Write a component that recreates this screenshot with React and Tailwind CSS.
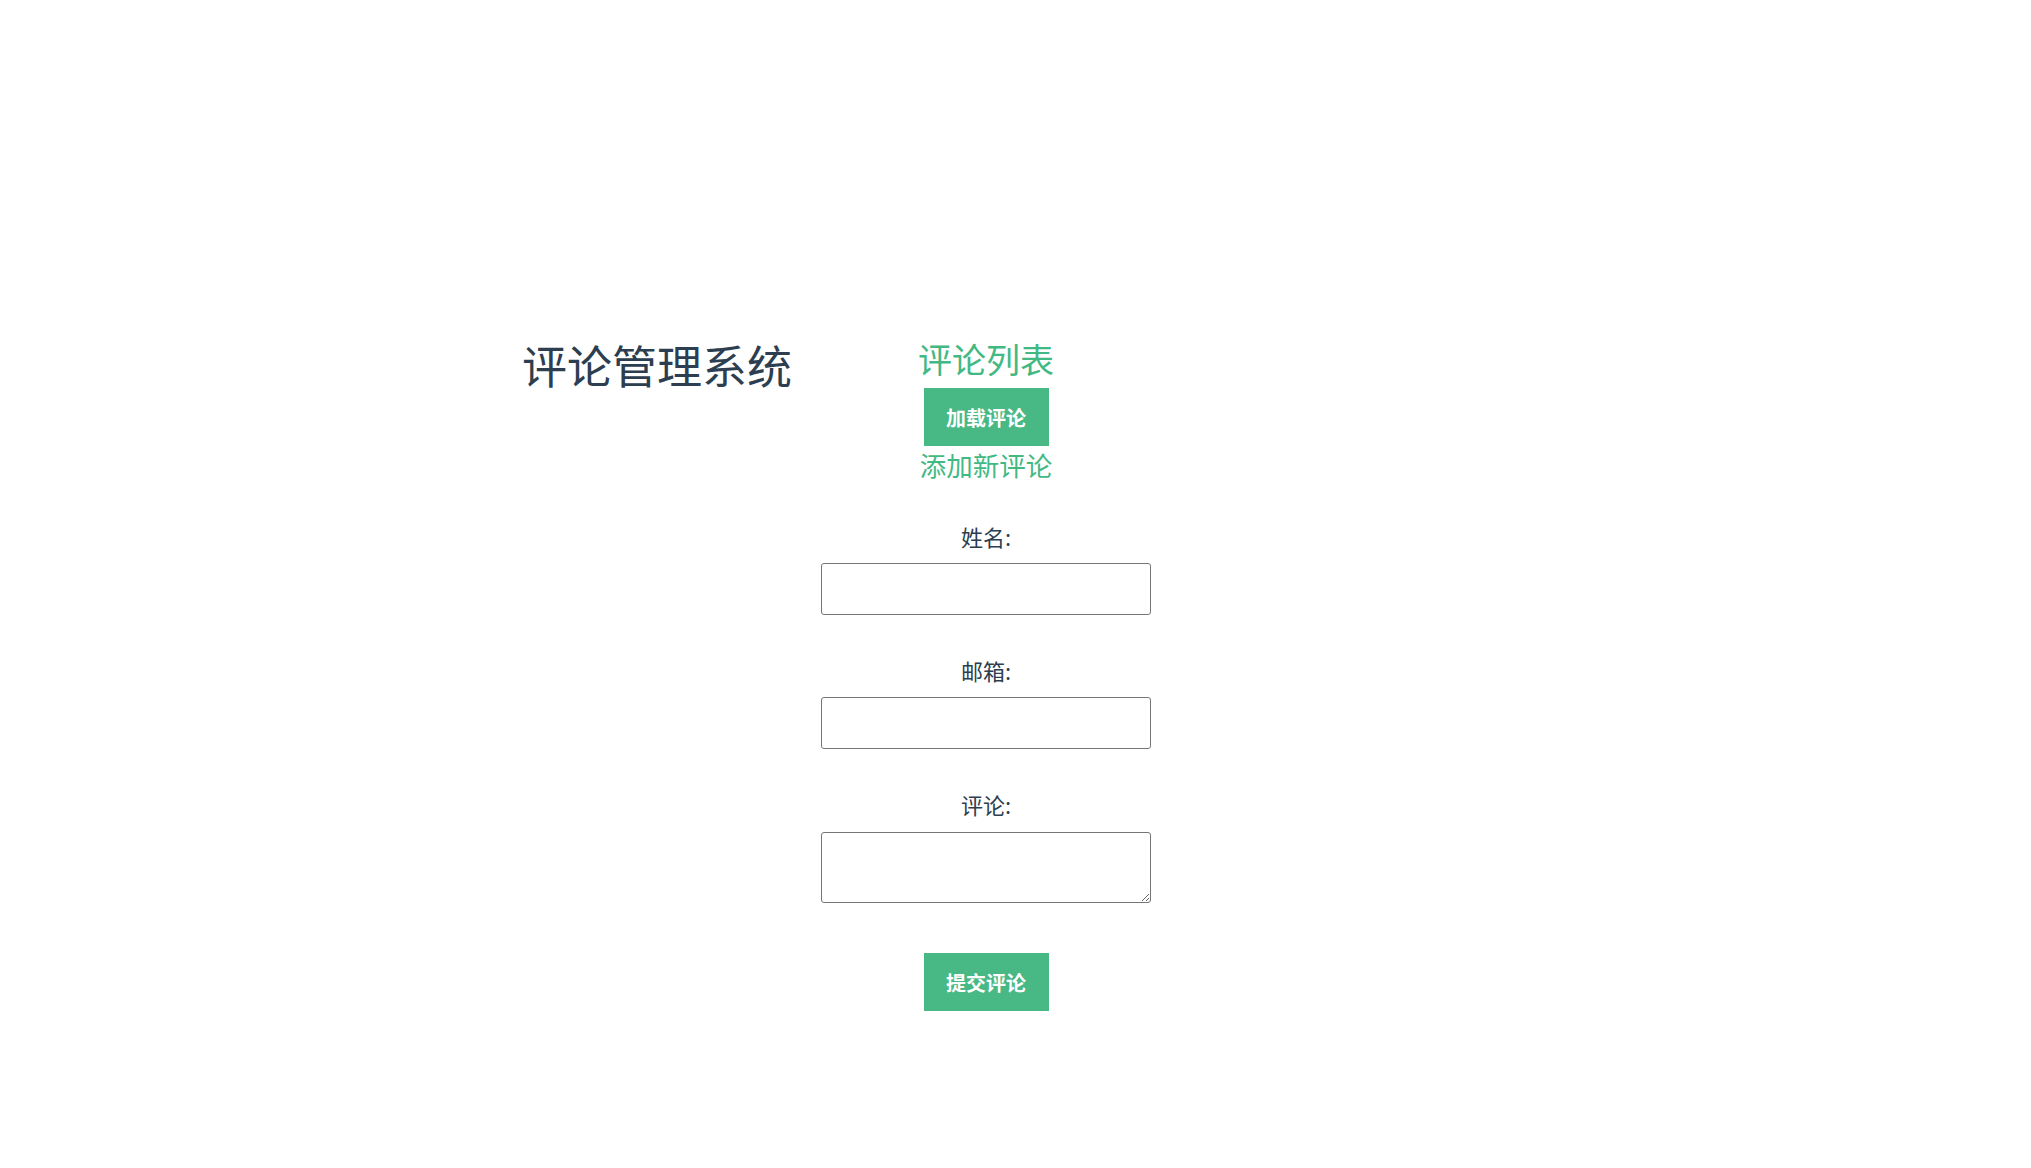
export default function App() {
  return (
    <div
      className="min-h-screen bg-white text-[#2c3e50]"
      style={{ fontFamily: '"Noto Sans CJK SC", "Noto Sans", sans-serif' }}
    >
      <div className="flex pt-[342px] ml-[522px]">
        <header className="w-[299px] shrink-0">
          <h1 className="mt-0 text-[45px] leading-none font-normal">评论管理系统</h1>
        </header>
        <main className="w-[330px] flex flex-col items-center text-center">
          <h2 className="text-[34px] leading-none text-[#42b983]">评论列表</h2>
          <button className="mt-[12px] w-[125px] h-[58px] pt-[2px] bg-[#48b884] text-white text-[20px] font-bold leading-none">
            加载评论
          </button>
          <h3 className="mt-[6px] text-[26.5px] leading-none text-[#42b983]">添加新评论</h3>
          <form className="mt-[46px] w-full flex flex-col items-center">
            <div className="w-full flex flex-col items-center">
              <label className="text-[22px] leading-none">姓名:</label>
              <input
                type="text"
                className="mt-[16px] w-[330px] h-[52px] border border-[#767676] rounded-[3px] px-2"
              />
            </div>
            <div className="mt-[44px] w-full flex flex-col items-center">
              <label className="text-[22px] leading-none">邮箱:</label>
              <input
                type="email"
                className="mt-[16px] w-[330px] h-[52px] border border-[#767676] rounded-[3px] px-2"
              />
            </div>
            <div className="mt-[44px] w-full flex flex-col items-center">
              <label className="text-[22px] leading-none">评论:</label>
              <textarea className="mt-[17px] w-[330px] h-[71px] border border-[#767676] rounded-[3px] px-2 block" />
            </div>
            <button
              type="button"
              className="mt-[50px] w-[125px] h-[58px] pt-[2px] bg-[#48b884] text-white text-[20px] font-bold leading-none"
            >
              提交评论
            </button>
          </form>
        </main>
      </div>
    </div>
  );
}
